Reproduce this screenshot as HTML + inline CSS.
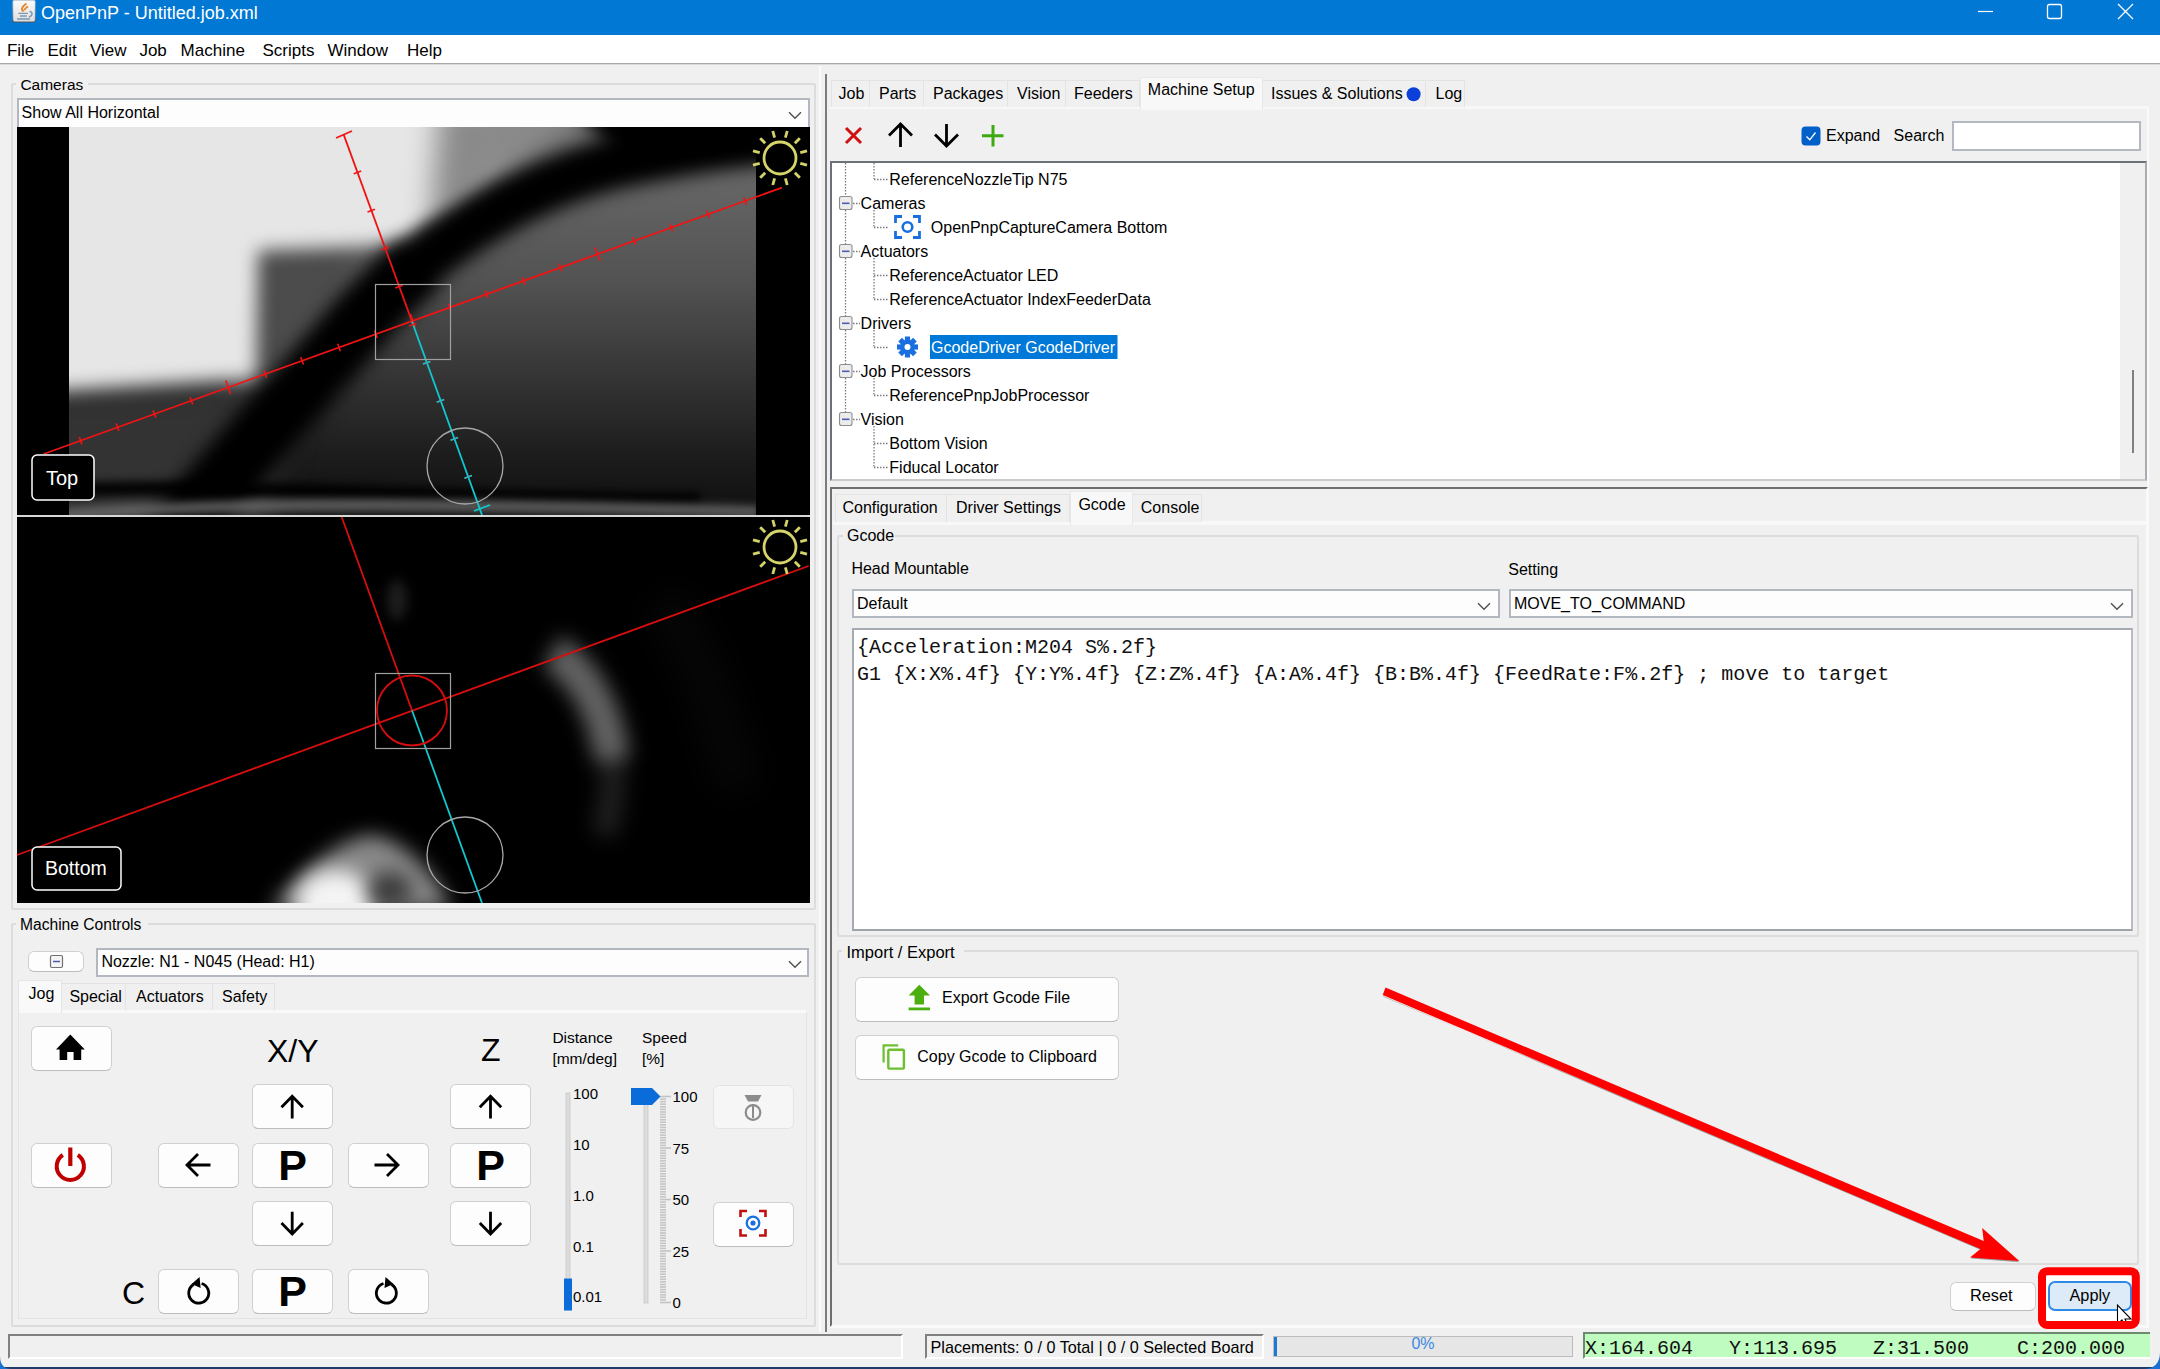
<!DOCTYPE html>
<html><head><meta charset="utf-8"><style>
html,body{margin:0;padding:0;}
body{width:2160px;height:1369px;background:#F0F0F0;position:relative;overflow:hidden;font-family:"Liberation Sans",sans-serif;}
.t{position:absolute;white-space:nowrap;line-height:1;font-family:"Liberation Sans",sans-serif;}
.m{position:absolute;white-space:pre;line-height:1;font-family:"Liberation Mono",monospace;}
.r{position:absolute;box-sizing:border-box;}
.btn{position:absolute;box-sizing:border-box;background:#FDFDFD;border:1px solid #D0D0D0;border-bottom-color:#BDBDBD;border-radius:6px;}
.combo{position:absolute;box-sizing:border-box;background:#FDFDFD;border:2px solid #B3B7BF;}
.tb{position:absolute;box-sizing:border-box;border:2px solid #DCDCDC;border-radius:2px;}
svg{position:absolute;overflow:visible;}
</style></head><body>
<div class="r" style="left:0px;top:0px;width:2160px;height:35px;background:#0078D4;"></div>
<svg style="left:0;top:0" width="40" height="35">
<defs><linearGradient id="jg" x1="0" y1="0" x2="0" y2="1"><stop offset="0" stop-color="#FAFAFA"/><stop offset="1" stop-color="#DEDEDE"/></linearGradient></defs>
<linearGradient id="jb" x1="0" y1="0" x2="0" y2="1"><stop offset="0" stop-color="#C8D2DC"/><stop offset="0.7" stop-color="#8A949E"/><stop offset="1" stop-color="#4A525A"/></linearGradient><rect x="12.5" y="0" width="23" height="22.5" rx="1.5" fill="url(#jb)"/>
<rect x="13.3" y="1" width="21.5" height="20.5" rx="1.5" fill="url(#jg)"/>
<path d="M23.5 11.5 C 20 9, 23 6, 26.5 3.5 M24.5 10.5 C 24 9, 26 8, 28 6.5" stroke="#E8862A" stroke-width="1.8" fill="none"/>
<path d="M18.3 13.3 H28 M20 16 H26.8 M17 19 H30" stroke="#7E98B4" stroke-width="1.3"/>
<path d="M29.5 11.5 C 33 12, 33 15.5, 29 17" stroke="#7E98B4" stroke-width="1.4" fill="none"/>
</svg>
<div class="t" style="left:41px;top:4.26px;font-size:18px;color:#FFFFFF;">OpenPnP - Untitled.job.xml</div>
<svg style="left:0;top:0" width="2160" height="35">
<line x1="1978" y1="11.5" x2="1993" y2="11.5" stroke="#FFF" stroke-width="1.2"/>
<rect x="2047.5" y="4.5" width="14" height="14" rx="2" fill="none" stroke="#FFF" stroke-width="1.3"/>
<path d="M2118 4 L2133 19 M2133 4 L2118 19" stroke="#FFF" stroke-width="1.3"/>
</svg>
<div class="r" style="left:0px;top:35px;width:2160px;height:28px;background:#FFFFFF;"></div>
<div class="r" style="left:0px;top:63px;width:2160px;height:1px;background:#A9A9A9;"></div>
<div class="r" style="left:0px;top:64px;width:2160px;height:1px;background:#DADADA;"></div>
<div class="t" style="left:6.9px;top:41.61px;font-size:17px;color:#000;">File</div>
<div class="t" style="left:47.5px;top:41.61px;font-size:17px;color:#000;">Edit</div>
<div class="t" style="left:90px;top:41.61px;font-size:17px;color:#000;">View</div>
<div class="t" style="left:139.4px;top:41.61px;font-size:17px;color:#000;">Job</div>
<div class="t" style="left:180.6px;top:41.61px;font-size:17px;color:#000;">Machine</div>
<div class="t" style="left:262.5px;top:41.61px;font-size:17px;color:#000;">Scripts</div>
<div class="t" style="left:327.5px;top:41.61px;font-size:17px;color:#000;">Window</div>
<div class="t" style="left:407px;top:41.61px;font-size:17px;color:#000;">Help</div>
<div class="tb" style="left:11px;top:83px;width:805px;height:827px;"></div>
<div class="r" style="left:16px;top:74px;width:72px;height:20px;background:#F0F0F0;"></div>
<div class="t" style="left:20.4px;top:77.28px;font-size:15.5px;color:#000;">Cameras</div>
<div class="combo" style="left:17px;top:98px;width:793px;height:31px;"></div>
<div class="t" style="left:21.6px;top:104.86px;font-size:16px;color:#000;">Show All Horizontal</div>
<svg style="left:0;top:0" width="1" height="1"><path d="M789 112.2 L795 118.2 L801 112.2" stroke="#505050" stroke-width="1.4" fill="none"/></svg>
<svg style="left:17px;top:127px" width="793" height="388" viewBox="17 127 793 388">
<defs>
<filter id="b8" filterUnits="userSpaceOnUse" color-interpolation-filters="sRGB" x="0" y="0" width="900" height="1000"><feGaussianBlur stdDeviation="9"/></filter>
<filter id="b14" filterUnits="userSpaceOnUse" color-interpolation-filters="sRGB" x="0" y="0" width="900" height="1000"><feGaussianBlur stdDeviation="14"/></filter>
<filter id="b5" filterUnits="userSpaceOnUse" color-interpolation-filters="sRGB" x="0" y="0" width="900" height="1000"><feGaussianBlur stdDeviation="5"/></filter>
<linearGradient id="bg1" x1="0" y1="0" x2="0" y2="1">
<stop offset="0" stop-color="#707070"/><stop offset="0.4" stop-color="#525252"/><stop offset="0.85" stop-color="#1C1C1C"/><stop offset="1" stop-color="#101010"/>
</linearGradient>
<clipPath id="cimg"><rect x="69" y="127" width="687" height="388"/></clipPath>
</defs>
<rect x="17" y="127" width="793" height="388" fill="#000"/>
<g clip-path="url(#cimg)">
<rect x="69" y="127" width="687" height="388" fill="url(#bg1)"/>
<path d="M40 390 L40 540 L260 540 L300 390 Z" fill="#333333" filter="url(#b14)"/>
<path d="M230 255 L350 250 L330 390 L230 390 Z" fill="#4C4C4C" filter="url(#b8)"/>
<path d="M40 100 L470 100 L500 160 L540 130 L440 215 L395 245 L258 250 L256 378 L40 392 Z" fill="#E6E6E6" filter="url(#b8)"/>
<path d="M440 100 L600 100 L480 200 L430 225 Z" fill="#8A8A8A" filter="url(#b14)"/>
<path d="M575 110 L820 110 L820 142 C 760 144, 700 148, 620 158 Z" fill="#000" filter="url(#b8)"/>
<g filter="url(#b8)"><path d="M168 545 C 228 470, 305 385, 360 322 C 380 300, 400 280, 420 262" stroke="#000" stroke-width="64" fill="none"/><path d="M380 300 C 430 250, 520 180, 640 158 C 700 146, 740 140, 820 134" stroke="#000" stroke-width="52" fill="none"/></g>
<path d="M40 492 C 200 480, 400 500, 700 500" stroke="#000" stroke-width="14" fill="none" filter="url(#b5)"/>
<path d="M60 515 C 250 500, 500 505, 760 512" stroke="#6A6A6A" stroke-width="10" fill="none" filter="url(#b5)"/>
</g>
<line x1="43.7" y1="454" x2="782" y2="187.6" stroke="#F01414" stroke-width="1.8"/><line x1="82.0" y1="444.4" x2="79.3" y2="436.9" stroke="#F01414" stroke-width="1.6"/><line x1="118.9" y1="431.1" x2="116.2" y2="423.6" stroke="#F01414" stroke-width="1.6"/><line x1="155.8" y1="417.8" x2="153.1" y2="410.3" stroke="#F01414" stroke-width="1.6"/><line x1="192.7" y1="404.5" x2="190.0" y2="397.0" stroke="#F01414" stroke-width="1.6"/><line x1="230.7" y1="394.2" x2="225.8" y2="380.6" stroke="#F01414" stroke-width="1.6"/><line x1="266.5" y1="377.8" x2="263.8" y2="370.3" stroke="#F01414" stroke-width="1.6"/><line x1="303.5" y1="364.5" x2="300.7" y2="357.0" stroke="#F01414" stroke-width="1.6"/><line x1="340.4" y1="351.2" x2="337.7" y2="343.7" stroke="#F01414" stroke-width="1.6"/><line x1="377.3" y1="337.9" x2="374.6" y2="330.4" stroke="#F01414" stroke-width="1.6"/><line x1="415.3" y1="327.6" x2="410.4" y2="314.0" stroke="#F01414" stroke-width="1.6"/><line x1="451.1" y1="311.2" x2="448.4" y2="303.7" stroke="#F01414" stroke-width="1.6"/><line x1="488.0" y1="297.9" x2="485.3" y2="290.4" stroke="#F01414" stroke-width="1.6"/><line x1="525.0" y1="284.6" x2="522.2" y2="277.1" stroke="#F01414" stroke-width="1.6"/><line x1="561.9" y1="271.3" x2="559.2" y2="263.8" stroke="#F01414" stroke-width="1.6"/><line x1="599.9" y1="261.0" x2="595.0" y2="247.4" stroke="#F01414" stroke-width="1.6"/><line x1="635.7" y1="244.6" x2="633.0" y2="237.1" stroke="#F01414" stroke-width="1.6"/><line x1="672.6" y1="231.3" x2="669.9" y2="223.8" stroke="#F01414" stroke-width="1.6"/><line x1="709.5" y1="218.0" x2="706.8" y2="210.5" stroke="#F01414" stroke-width="1.6"/><line x1="746.4" y1="204.7" x2="743.7" y2="197.2" stroke="#F01414" stroke-width="1.6"/><line x1="343.6" y1="134.4" x2="412" y2="321.5" stroke="#F01414" stroke-width="1.8"/><line x1="412" y1="321.5" x2="482" y2="515" stroke="#10C8D0" stroke-width="1.8"/><line x1="353.7" y1="173.8" x2="361.2" y2="171.1" stroke="#F01414" stroke-width="1.6"/><line x1="367.5" y1="211.9" x2="375.0" y2="209.2" stroke="#F01414" stroke-width="1.6"/><line x1="381.4" y1="249.9" x2="388.9" y2="247.2" stroke="#F01414" stroke-width="1.6"/><line x1="395.2" y1="288.0" x2="402.7" y2="285.3" stroke="#F01414" stroke-width="1.6"/><line x1="409.0" y1="326.1" x2="416.6" y2="323.3" stroke="#F01414" stroke-width="1.6"/><line x1="422.9" y1="364.1" x2="430.4" y2="361.4" stroke="#F01414" stroke-width="1.6"/><line x1="436.7" y1="402.2" x2="444.2" y2="399.5" stroke="#F01414" stroke-width="1.6"/><line x1="450.6" y1="440.2" x2="458.1" y2="437.5" stroke="#F01414" stroke-width="1.6"/><line x1="464.4" y1="478.3" x2="471.9" y2="475.6" stroke="#F01414" stroke-width="1.6"/><line x1="422.9" y1="364.1" x2="430.4" y2="361.4" stroke="#10C8D0" stroke-width="1.6"/><line x1="436.7" y1="402.2" x2="444.2" y2="399.5" stroke="#10C8D0" stroke-width="1.6"/><line x1="450.6" y1="440.2" x2="458.1" y2="437.5" stroke="#10C8D0" stroke-width="1.6"/><line x1="464.4" y1="478.3" x2="471.9" y2="475.6" stroke="#10C8D0" stroke-width="1.6"/><line x1="336" y1="138" x2="352" y2="131" stroke="#F01414" stroke-width="1.8"/><line x1="474" y1="511" x2="490" y2="505" stroke="#10C8D0" stroke-width="1.8"/><rect x="375.5" y="284.5" width="75" height="75" fill="none" stroke="#A0A0A0" stroke-width="1.2"/><circle cx="465" cy="466" r="38" fill="none" stroke="#A8A8A8" stroke-width="1.3"/><circle cx="780" cy="158" r="16" fill="none" stroke="#D4D46A" stroke-width="2.8"/><line x1="800.3" y1="163.4" x2="807.0" y2="165.2" stroke="#D4D46A" stroke-width="2.8"/><line x1="794.8" y1="172.8" x2="799.8" y2="177.8" stroke="#D4D46A" stroke-width="2.8"/><line x1="785.4" y1="178.3" x2="787.2" y2="185.0" stroke="#D4D46A" stroke-width="2.8"/><line x1="774.6" y1="178.3" x2="772.8" y2="185.0" stroke="#D4D46A" stroke-width="2.8"/><line x1="765.2" y1="172.8" x2="760.2" y2="177.8" stroke="#D4D46A" stroke-width="2.8"/><line x1="759.7" y1="163.4" x2="753.0" y2="165.2" stroke="#D4D46A" stroke-width="2.8"/><line x1="759.7" y1="152.6" x2="753.0" y2="150.8" stroke="#D4D46A" stroke-width="2.8"/><line x1="765.2" y1="143.2" x2="760.2" y2="138.2" stroke="#D4D46A" stroke-width="2.8"/><line x1="774.6" y1="137.7" x2="772.8" y2="131.0" stroke="#D4D46A" stroke-width="2.8"/><line x1="785.4" y1="137.7" x2="787.2" y2="131.0" stroke="#D4D46A" stroke-width="2.8"/><line x1="794.8" y1="143.2" x2="799.8" y2="138.2" stroke="#D4D46A" stroke-width="2.8"/><line x1="800.3" y1="152.6" x2="807.0" y2="150.8" stroke="#D4D46A" stroke-width="2.8"/><rect x="32" y="455" width="62" height="45" rx="5" fill="#000" stroke="#FFF" stroke-width="1.5"/><text x="46" y="485" fill="#FFF" font-family="Liberation Sans" font-size="20">Top</text></svg>
<div class="r" style="left:17px;top:515px;width:793px;height:2px;background:#D8D8D8;"></div>
<svg style="left:17px;top:517px" width="793" height="386" viewBox="17 517 793 386">
<defs>
<filter id="c6" filterUnits="userSpaceOnUse" color-interpolation-filters="sRGB" x="0" y="0" width="900" height="1000"><feGaussianBlur stdDeviation="6"/></filter>
<filter id="c10" filterUnits="userSpaceOnUse" color-interpolation-filters="sRGB" x="0" y="0" width="900" height="1000"><feGaussianBlur stdDeviation="10"/></filter>
<filter id="c16" filterUnits="userSpaceOnUse" color-interpolation-filters="sRGB" x="0" y="0" width="900" height="1000"><feGaussianBlur stdDeviation="16"/></filter>
<clipPath id="cimg2"><rect x="17" y="517" width="793" height="386"/></clipPath>
</defs>
<rect x="17" y="517" width="793" height="386" fill="#000"/>
<g clip-path="url(#cimg2)">
<g filter="url(#c10)"><path d="M612 760 C 614 790, 610 815, 603 835" stroke="#1E1E1E" stroke-width="26" fill="none"/><path d="M552 652 C 575 665, 605 700, 612 760" stroke="#626262" stroke-width="36" fill="none"/></g>
<ellipse cx="397" cy="600" rx="10" ry="20" fill="#1E1E1E" filter="url(#c6)"/>
<path d="M660 600 C 700 650, 720 720, 740 790" stroke="#060606" stroke-width="44" fill="none" filter="url(#c16)"/>
<path d="M270 910 C 300 870, 350 830, 378 836 C 410 845, 440 880, 450 910 Z" fill="#8A8A8A" filter="url(#c10)"/>
<ellipse cx="335" cy="905" rx="40" ry="35" fill="#F4F4F4" filter="url(#c10)"/>
<ellipse cx="390" cy="890" rx="22" ry="18" fill="#3A3A3A" filter="url(#c10)"/>
</g>
<line x1="17" y1="855" x2="808.6" y2="566" stroke="#D80E0E" stroke-width="1.8"/><line x1="341.7" y1="517" x2="412" y2="710.5" stroke="#D80E0E" stroke-width="1.8"/><line x1="412" y1="710.5" x2="482" y2="903" stroke="#10C8D0" stroke-width="1.8"/><rect x="375.5" y="673.5" width="75" height="75" fill="none" stroke="#A0A0A0" stroke-width="1.2"/><circle cx="412" cy="710.5" r="35" fill="none" stroke="#D80E0E" stroke-width="1.8"/><circle cx="465" cy="855" r="38" fill="none" stroke="#A8A8A8" stroke-width="1.3"/><circle cx="780" cy="547" r="16" fill="none" stroke="#D4D46A" stroke-width="2.8"/><line x1="800.3" y1="552.4" x2="807.0" y2="554.2" stroke="#D4D46A" stroke-width="2.8"/><line x1="794.8" y1="561.8" x2="799.8" y2="566.8" stroke="#D4D46A" stroke-width="2.8"/><line x1="785.4" y1="567.3" x2="787.2" y2="574.0" stroke="#D4D46A" stroke-width="2.8"/><line x1="774.6" y1="567.3" x2="772.8" y2="574.0" stroke="#D4D46A" stroke-width="2.8"/><line x1="765.2" y1="561.8" x2="760.2" y2="566.8" stroke="#D4D46A" stroke-width="2.8"/><line x1="759.7" y1="552.4" x2="753.0" y2="554.2" stroke="#D4D46A" stroke-width="2.8"/><line x1="759.7" y1="541.6" x2="753.0" y2="539.8" stroke="#D4D46A" stroke-width="2.8"/><line x1="765.2" y1="532.2" x2="760.2" y2="527.2" stroke="#D4D46A" stroke-width="2.8"/><line x1="774.6" y1="526.7" x2="772.8" y2="520.0" stroke="#D4D46A" stroke-width="2.8"/><line x1="785.4" y1="526.7" x2="787.2" y2="520.0" stroke="#D4D46A" stroke-width="2.8"/><line x1="794.8" y1="532.2" x2="799.8" y2="527.2" stroke="#D4D46A" stroke-width="2.8"/><line x1="800.3" y1="541.6" x2="807.0" y2="539.8" stroke="#D4D46A" stroke-width="2.8"/><rect x="32" y="847" width="89" height="43" rx="5" fill="#000" stroke="#FFF" stroke-width="1.5"/><text x="45" y="875" fill="#FFF" font-family="Liberation Sans" font-size="19.5">Bottom</text></svg>
<div class="tb" style="left:11px;top:923px;width:805px;height:404px;"></div>
<div class="r" style="left:16px;top:912px;width:132px;height:20px;background:#F0F0F0;"></div>
<div class="t" style="left:20px;top:917.29px;font-size:15.6px;color:#000;">Machine Controls</div>
<div class="btn" style="left:28px;top:951px;width:56px;height:21px;border-radius:6px;"></div>
<svg style="left:0;top:0" width="1" height="1"><rect x="50.5" y="955.5" width="12" height="12" rx="1.5" fill="#F4F4F4" stroke="#707070" stroke-width="1.2"/><line x1="53" y1="961.5" x2="60" y2="961.5" stroke="#4A5AB0" stroke-width="1.5"/></svg>
<div class="combo" style="left:96px;top:948px;width:713px;height:29px;"></div>
<div class="t" style="left:101.4px;top:954.46px;font-size:16px;color:#000;">Nozzle: N1 - N045 (Head: H1)</div>
<svg style="left:0;top:0" width="1" height="1"><path d="M789 961.2 L795 967.2 L801 961.2" stroke="#505050" stroke-width="1.4" fill="none"/></svg>
<div class="r" style="left:18px;top:1010px;width:789px;height:309px;border:1px solid #E4E4E4;border-top:3px solid #F9F9F9;"></div>
<div class="r" style="left:18px;top:980px;width:44px;height:33px;background:#F9F9F9;border:1px solid #E6E6E6;border-bottom:none;"></div>
<div class="t" style="left:28.5px;top:985.76px;font-size:16px;color:#000;">Jog</div>
<div class="r" style="left:62px;top:983px;width:64.4px;height:27px;background:#F0F0F0;border:1px solid #E2E2E2;border-bottom:none;border-left:none;"></div>
<div class="t" style="left:69.4px;top:989.26px;font-size:16px;color:#000;">Special</div>
<div class="r" style="left:126.4px;top:983px;width:86.79999999999998px;height:27px;background:#F0F0F0;border:1px solid #E2E2E2;border-bottom:none;border-left:none;"></div>
<div class="t" style="left:136.1px;top:989.26px;font-size:16px;color:#000;">Actuators</div>
<div class="r" style="left:213.2px;top:983px;width:61.80000000000001px;height:27px;background:#F0F0F0;border:1px solid #E2E2E2;border-bottom:none;border-left:none;"></div>
<div class="t" style="left:222px;top:989.26px;font-size:16px;color:#000;">Safety</div>
<div class="btn" style="left:31px;top:1026px;width:81px;height:45px;"></div>
<div class="btn" style="left:252px;top:1084px;width:81px;height:45px;"></div>
<div class="btn" style="left:31px;top:1143px;width:81px;height:45px;"></div>
<div class="btn" style="left:158px;top:1143px;width:81px;height:45px;"></div>
<div class="btn" style="left:252px;top:1143px;width:81px;height:45px;"></div>
<div class="btn" style="left:348px;top:1143px;width:81px;height:45px;"></div>
<div class="btn" style="left:252px;top:1201px;width:81px;height:45px;"></div>
<div class="btn" style="left:158px;top:1269px;width:81px;height:45px;"></div>
<div class="btn" style="left:252px;top:1269px;width:81px;height:45px;"></div>
<div class="btn" style="left:348px;top:1269px;width:81px;height:45px;"></div>
<div class="btn" style="left:450px;top:1084px;width:81px;height:45px;"></div>
<div class="btn" style="left:450px;top:1143px;width:81px;height:45px;"></div>
<div class="btn" style="left:450px;top:1201px;width:81px;height:45px;"></div>
<div class="btn" style="left:713px;top:1202px;width:81px;height:45px;"></div>
<div class="btn" style="left:713px;top:1085px;width:81px;height:44px;background:#F6F6F6;border-color:#E4E4E4;"></div>
<svg style="left:0;top:0" width="1" height="1"><path d="M56 1049.5 L70.3 1034.5 L84.8 1049.5 L81.2 1049.5 L81.2 1060 L73.6 1060 L73.6 1052 L67.2 1052 L67.2 1060 L59.6 1060 L59.6 1049.5 Z" fill="#000"/><path d="M292.2 1118.5 L292.2 1096.8 M281.5 1107.3 L292.2 1096.3 L302.9 1107.3" stroke="#000" stroke-width="2.8" fill="none" stroke-linejoin="miter"/><path d="M490.5 1118.5 L490.5 1096.8 M479.8 1107.3 L490.5 1096.3 L501.2 1107.3" stroke="#000" stroke-width="2.8" fill="none" stroke-linejoin="miter"/><path d="M292.2 1211.7 L292.2 1233.5 M281.5 1223.0 L292.2 1234.0 L302.9 1223.0" stroke="#000" stroke-width="2.8" fill="none"/><path d="M490.5 1211.7 L490.5 1233.5 M479.8 1223.0 L490.5 1234.0 L501.2 1223.0" stroke="#000" stroke-width="2.8" fill="none"/><path d="M210.5 1165 L187 1165 M198 1154 L187 1165 L198 1176" stroke="#000" stroke-width="2.8" fill="none"/><path d="M374.5 1165 L398 1165 M387 1154 L398 1165 L387 1176" stroke="#000" stroke-width="2.8" fill="none"/><path d="M62.8 1155 A 13.6 13.6 0 1 0 77.8 1155" stroke="#C00000" stroke-width="4" fill="none"/><line x1="70.3" y1="1147.5" x2="70.3" y2="1166" stroke="#C00000" stroke-width="4.2"/><path d="M193.6 1284.5 A 10 10 0 1 0 201.6 1283.5" stroke="#000" stroke-width="2.8" fill="none"/><path d="M199.6 1277 L191.6 1284 L200.6 1288 Z" fill="#000"/><path d="M391.5 1284.5 A 10 10 0 1 1 383.5 1283.5" stroke="#000" stroke-width="2.8" fill="none"/><path d="M385.5 1277 L393.5 1284 L384.5 1288 Z" fill="#000"/><path d="M744.5 1095 L761.5 1095 L758 1101.5 L748 1101.5 Z" fill="#8C8C8C"/><circle cx="753" cy="1112.5" r="7.3" fill="none" stroke="#8C8C8C" stroke-width="2.2"/><line x1="753" y1="1104" x2="753" y2="1118" stroke="#8C8C8C" stroke-width="2"/><path d="M740.5 1217 V1211 H747 M759 1211 H765.5 V1217 M765.5 1229 V1235.5 H759 M747 1235.5 H740.5 V1229" stroke="#C01010" stroke-width="2.6" fill="none"/><circle cx="753" cy="1223" r="6.3" fill="none" stroke="#1A6FE0" stroke-width="2.3"/><circle cx="753" cy="1223" r="2.6" fill="#1A6FE0"/><rect x="566" y="1093" width="4" height="217" fill="#DCDCDC" stroke="#C8C8C8" stroke-width="0.8"/><rect x="564" y="1278.5" width="8" height="32" fill="#0A6CD8"/><rect x="644" y="1097" width="4" height="206" fill="#DCDCDC" stroke="#C8C8C8" stroke-width="0.8"/><line x1="660" y1="1096.5" x2="671" y2="1096.5" stroke="#C4C4C4" stroke-width="1.6"/><line x1="660" y1="1099.1" x2="666" y2="1099.1" stroke="#C4C4C4" stroke-width="1.6"/><line x1="660" y1="1101.7" x2="666" y2="1101.7" stroke="#C4C4C4" stroke-width="1.6"/><line x1="660" y1="1104.2" x2="666" y2="1104.2" stroke="#C4C4C4" stroke-width="1.6"/><line x1="660" y1="1106.8" x2="666" y2="1106.8" stroke="#C4C4C4" stroke-width="1.6"/><line x1="660" y1="1109.4" x2="666" y2="1109.4" stroke="#C4C4C4" stroke-width="1.6"/><line x1="660" y1="1112.0" x2="666" y2="1112.0" stroke="#C4C4C4" stroke-width="1.6"/><line x1="660" y1="1114.5" x2="666" y2="1114.5" stroke="#C4C4C4" stroke-width="1.6"/><line x1="660" y1="1117.1" x2="666" y2="1117.1" stroke="#C4C4C4" stroke-width="1.6"/><line x1="660" y1="1119.7" x2="666" y2="1119.7" stroke="#C4C4C4" stroke-width="1.6"/><line x1="660" y1="1122.2" x2="666" y2="1122.2" stroke="#C4C4C4" stroke-width="1.6"/><line x1="660" y1="1124.8" x2="666" y2="1124.8" stroke="#C4C4C4" stroke-width="1.6"/><line x1="660" y1="1127.4" x2="666" y2="1127.4" stroke="#C4C4C4" stroke-width="1.6"/><line x1="660" y1="1130.0" x2="666" y2="1130.0" stroke="#C4C4C4" stroke-width="1.6"/><line x1="660" y1="1132.5" x2="666" y2="1132.5" stroke="#C4C4C4" stroke-width="1.6"/><line x1="660" y1="1135.1" x2="666" y2="1135.1" stroke="#C4C4C4" stroke-width="1.6"/><line x1="660" y1="1137.7" x2="666" y2="1137.7" stroke="#C4C4C4" stroke-width="1.6"/><line x1="660" y1="1140.3" x2="666" y2="1140.3" stroke="#C4C4C4" stroke-width="1.6"/><line x1="660" y1="1142.8" x2="666" y2="1142.8" stroke="#C4C4C4" stroke-width="1.6"/><line x1="660" y1="1145.4" x2="666" y2="1145.4" stroke="#C4C4C4" stroke-width="1.6"/><line x1="660" y1="1148.0" x2="671" y2="1148.0" stroke="#C4C4C4" stroke-width="1.6"/><line x1="660" y1="1150.6" x2="666" y2="1150.6" stroke="#C4C4C4" stroke-width="1.6"/><line x1="660" y1="1153.2" x2="666" y2="1153.2" stroke="#C4C4C4" stroke-width="1.6"/><line x1="660" y1="1155.7" x2="666" y2="1155.7" stroke="#C4C4C4" stroke-width="1.6"/><line x1="660" y1="1158.3" x2="666" y2="1158.3" stroke="#C4C4C4" stroke-width="1.6"/><line x1="660" y1="1160.9" x2="666" y2="1160.9" stroke="#C4C4C4" stroke-width="1.6"/><line x1="660" y1="1163.5" x2="666" y2="1163.5" stroke="#C4C4C4" stroke-width="1.6"/><line x1="660" y1="1166.0" x2="666" y2="1166.0" stroke="#C4C4C4" stroke-width="1.6"/><line x1="660" y1="1168.6" x2="666" y2="1168.6" stroke="#C4C4C4" stroke-width="1.6"/><line x1="660" y1="1171.2" x2="666" y2="1171.2" stroke="#C4C4C4" stroke-width="1.6"/><line x1="660" y1="1173.8" x2="666" y2="1173.8" stroke="#C4C4C4" stroke-width="1.6"/><line x1="660" y1="1176.3" x2="666" y2="1176.3" stroke="#C4C4C4" stroke-width="1.6"/><line x1="660" y1="1178.9" x2="666" y2="1178.9" stroke="#C4C4C4" stroke-width="1.6"/><line x1="660" y1="1181.5" x2="666" y2="1181.5" stroke="#C4C4C4" stroke-width="1.6"/><line x1="660" y1="1184.0" x2="666" y2="1184.0" stroke="#C4C4C4" stroke-width="1.6"/><line x1="660" y1="1186.6" x2="666" y2="1186.6" stroke="#C4C4C4" stroke-width="1.6"/><line x1="660" y1="1189.2" x2="666" y2="1189.2" stroke="#C4C4C4" stroke-width="1.6"/><line x1="660" y1="1191.8" x2="666" y2="1191.8" stroke="#C4C4C4" stroke-width="1.6"/><line x1="660" y1="1194.3" x2="666" y2="1194.3" stroke="#C4C4C4" stroke-width="1.6"/><line x1="660" y1="1196.9" x2="666" y2="1196.9" stroke="#C4C4C4" stroke-width="1.6"/><line x1="660" y1="1199.5" x2="671" y2="1199.5" stroke="#C4C4C4" stroke-width="1.6"/><line x1="660" y1="1202.1" x2="666" y2="1202.1" stroke="#C4C4C4" stroke-width="1.6"/><line x1="660" y1="1204.7" x2="666" y2="1204.7" stroke="#C4C4C4" stroke-width="1.6"/><line x1="660" y1="1207.2" x2="666" y2="1207.2" stroke="#C4C4C4" stroke-width="1.6"/><line x1="660" y1="1209.8" x2="666" y2="1209.8" stroke="#C4C4C4" stroke-width="1.6"/><line x1="660" y1="1212.4" x2="666" y2="1212.4" stroke="#C4C4C4" stroke-width="1.6"/><line x1="660" y1="1215.0" x2="666" y2="1215.0" stroke="#C4C4C4" stroke-width="1.6"/><line x1="660" y1="1217.5" x2="666" y2="1217.5" stroke="#C4C4C4" stroke-width="1.6"/><line x1="660" y1="1220.1" x2="666" y2="1220.1" stroke="#C4C4C4" stroke-width="1.6"/><line x1="660" y1="1222.7" x2="666" y2="1222.7" stroke="#C4C4C4" stroke-width="1.6"/><line x1="660" y1="1225.2" x2="666" y2="1225.2" stroke="#C4C4C4" stroke-width="1.6"/><line x1="660" y1="1227.8" x2="666" y2="1227.8" stroke="#C4C4C4" stroke-width="1.6"/><line x1="660" y1="1230.4" x2="666" y2="1230.4" stroke="#C4C4C4" stroke-width="1.6"/><line x1="660" y1="1233.0" x2="666" y2="1233.0" stroke="#C4C4C4" stroke-width="1.6"/><line x1="660" y1="1235.5" x2="666" y2="1235.5" stroke="#C4C4C4" stroke-width="1.6"/><line x1="660" y1="1238.1" x2="666" y2="1238.1" stroke="#C4C4C4" stroke-width="1.6"/><line x1="660" y1="1240.7" x2="666" y2="1240.7" stroke="#C4C4C4" stroke-width="1.6"/><line x1="660" y1="1243.3" x2="666" y2="1243.3" stroke="#C4C4C4" stroke-width="1.6"/><line x1="660" y1="1245.8" x2="666" y2="1245.8" stroke="#C4C4C4" stroke-width="1.6"/><line x1="660" y1="1248.4" x2="666" y2="1248.4" stroke="#C4C4C4" stroke-width="1.6"/><line x1="660" y1="1251.0" x2="671" y2="1251.0" stroke="#C4C4C4" stroke-width="1.6"/><line x1="660" y1="1253.6" x2="666" y2="1253.6" stroke="#C4C4C4" stroke-width="1.6"/><line x1="660" y1="1256.2" x2="666" y2="1256.2" stroke="#C4C4C4" stroke-width="1.6"/><line x1="660" y1="1258.7" x2="666" y2="1258.7" stroke="#C4C4C4" stroke-width="1.6"/><line x1="660" y1="1261.3" x2="666" y2="1261.3" stroke="#C4C4C4" stroke-width="1.6"/><line x1="660" y1="1263.9" x2="666" y2="1263.9" stroke="#C4C4C4" stroke-width="1.6"/><line x1="660" y1="1266.5" x2="666" y2="1266.5" stroke="#C4C4C4" stroke-width="1.6"/><line x1="660" y1="1269.0" x2="666" y2="1269.0" stroke="#C4C4C4" stroke-width="1.6"/><line x1="660" y1="1271.6" x2="666" y2="1271.6" stroke="#C4C4C4" stroke-width="1.6"/><line x1="660" y1="1274.2" x2="666" y2="1274.2" stroke="#C4C4C4" stroke-width="1.6"/><line x1="660" y1="1276.8" x2="666" y2="1276.8" stroke="#C4C4C4" stroke-width="1.6"/><line x1="660" y1="1279.3" x2="666" y2="1279.3" stroke="#C4C4C4" stroke-width="1.6"/><line x1="660" y1="1281.9" x2="666" y2="1281.9" stroke="#C4C4C4" stroke-width="1.6"/><line x1="660" y1="1284.5" x2="666" y2="1284.5" stroke="#C4C4C4" stroke-width="1.6"/><line x1="660" y1="1287.0" x2="666" y2="1287.0" stroke="#C4C4C4" stroke-width="1.6"/><line x1="660" y1="1289.6" x2="666" y2="1289.6" stroke="#C4C4C4" stroke-width="1.6"/><line x1="660" y1="1292.2" x2="666" y2="1292.2" stroke="#C4C4C4" stroke-width="1.6"/><line x1="660" y1="1294.8" x2="666" y2="1294.8" stroke="#C4C4C4" stroke-width="1.6"/><line x1="660" y1="1297.3" x2="666" y2="1297.3" stroke="#C4C4C4" stroke-width="1.6"/><line x1="660" y1="1299.9" x2="666" y2="1299.9" stroke="#C4C4C4" stroke-width="1.6"/><line x1="660" y1="1302.5" x2="671" y2="1302.5" stroke="#C4C4C4" stroke-width="1.6"/><path d="M631 1088 H652 L660.5 1096.5 L652 1105 H631 Z" fill="#0A6CD8"/></svg>
<div class="t" style="left:278.2px;top:1144.20px;font-size:43px;color:#000;font-weight:bold;">P</div>
<div class="t" style="left:278.2px;top:1270.20px;font-size:43px;color:#000;font-weight:bold;">P</div>
<div class="t" style="left:476.2px;top:1144.20px;font-size:43px;color:#000;font-weight:bold;">P</div>
<div class="t" style="left:267px;top:1034.71px;font-size:32px;color:#000;">X/Y</div>
<div class="t" style="left:481px;top:1034.31px;font-size:32px;color:#000;">Z</div>
<div class="t" style="left:122px;top:1276.71px;font-size:32px;color:#000;">C</div>
<div class="t" style="left:552.4px;top:1030.28px;font-size:15.5px;color:#000;">Distance</div>
<div class="t" style="left:552.4px;top:1051.18px;font-size:15.5px;color:#000;">[mm/deg]</div>
<div class="t" style="left:642px;top:1030.28px;font-size:15.5px;color:#000;">Speed</div>
<div class="t" style="left:642px;top:1051.18px;font-size:15.5px;color:#000;">[%]</div>
<div class="t" style="left:573px;top:1085.80px;font-size:15px;color:#000;">100</div>
<div class="t" style="left:573px;top:1136.80px;font-size:15px;color:#000;">10</div>
<div class="t" style="left:573px;top:1187.80px;font-size:15px;color:#000;">1.0</div>
<div class="t" style="left:573px;top:1238.80px;font-size:15px;color:#000;">0.1</div>
<div class="t" style="left:573px;top:1288.80px;font-size:15px;color:#000;">0.01</div>
<div class="t" style="left:672.5px;top:1088.80px;font-size:15px;color:#000;">100</div>
<div class="t" style="left:672.5px;top:1140.80px;font-size:15px;color:#000;">75</div>
<div class="t" style="left:672.5px;top:1192.30px;font-size:15px;color:#000;">50</div>
<div class="t" style="left:672.5px;top:1243.80px;font-size:15px;color:#000;">25</div>
<div class="t" style="left:672.5px;top:1294.80px;font-size:15px;color:#000;">0</div>
<div class="r" style="left:819px;top:66px;width:2px;height:1266px;background:#FAFAFA;"></div>
<div class="r" style="left:825px;top:74px;width:2px;height:1258px;background:#7C7C7C;"></div>
<div class="r" style="left:830px;top:106px;width:1319px;height:1222px;border-top:3px solid #F8F8F8;border-right:2px solid #FAFAFA;border-bottom:2px solid #FAFAFA;"></div>
<div class="r" style="left:830.7px;top:80px;width:39.69999999999993px;height:27px;background:#F0F0F0;border:1px solid #E3E3E3;border-bottom:none;"></div>
<div class="t" style="left:838.6px;top:85.66px;font-size:16px;color:#000;">Job</div>
<div class="r" style="left:870.4px;top:80px;width:53.60000000000002px;height:27px;background:#F0F0F0;border:1px solid #E3E3E3;border-bottom:none;border-left:none;"></div>
<div class="t" style="left:879px;top:85.66px;font-size:16px;color:#000;">Parts</div>
<div class="r" style="left:924px;top:80px;width:84px;height:27px;background:#F0F0F0;border:1px solid #E3E3E3;border-bottom:none;border-left:none;"></div>
<div class="t" style="left:933px;top:85.66px;font-size:16px;color:#000;">Packages</div>
<div class="r" style="left:1008px;top:80px;width:57.5px;height:27px;background:#F0F0F0;border:1px solid #E3E3E3;border-bottom:none;border-left:none;"></div>
<div class="t" style="left:1017px;top:85.66px;font-size:16px;color:#000;">Vision</div>
<div class="r" style="left:1065.5px;top:80px;width:74.20000000000005px;height:27px;background:#F0F0F0;border:1px solid #E3E3E3;border-bottom:none;border-left:none;"></div>
<div class="t" style="left:1074px;top:85.66px;font-size:16px;color:#000;">Feeders</div>
<div class="r" style="left:1139.7px;top:77px;width:123.5px;height:33px;background:#F8F8F8;border:1px solid #E8E8E8;border-bottom:none;"></div>
<div class="t" style="left:1147.8px;top:82.36px;font-size:16px;color:#000;">Machine Setup</div>
<div class="r" style="left:1263.2px;top:80px;width:163.29999999999995px;height:27px;background:#F0F0F0;border:1px solid #E3E3E3;border-bottom:none;border-left:none;"></div>
<div class="t" style="left:1271px;top:85.66px;font-size:16px;color:#000;">Issues &amp; Solutions</div>
<div class="r" style="left:1426.5px;top:80px;width:38.90000000000009px;height:27px;background:#F0F0F0;border:1px solid #E3E3E3;border-bottom:none;border-left:none;"></div>
<div class="t" style="left:1435.5px;top:85.66px;font-size:16px;color:#000;">Log</div>
<svg style="left:0;top:0" width="1" height="1"><circle cx="1413.6" cy="94.3" r="7" fill="#0A40D8"/></svg>
<svg style="left:0;top:0" width="1" height="1"><path d="M846 128 L861 143 M861 128 L846 143" stroke="#D01010" stroke-width="3"/><path d="M900.5 147 V125 M889 135.5 L900.5 124 L912 135.5" stroke="#000" stroke-width="2.8" fill="none"/><path d="M946.5 124 V146 M935 134.5 L946.5 146 L958 134.5" stroke="#000" stroke-width="2.8" fill="none"/><path d="M993 125 V146.5 M982 135.8 H1003.5" stroke="#3EAA10" stroke-width="3"/><rect x="1801.5" y="126.5" width="19" height="19" rx="4" fill="#005FC8"/><path d="M1806.5 136.5 L1809.8 139.8 L1815.5 132.5" stroke="#FFF" stroke-width="1.3" fill="none"/></svg>
<div class="t" style="left:1826px;top:128.46px;font-size:16px;color:#000;">Expand</div>
<div class="t" style="left:1893.6px;top:128.46px;font-size:16px;color:#000;">Search</div>
<div class="r" style="left:1952px;top:121px;width:189px;height:30px;background:#FFF;border:2px solid #B4B8C0;"></div>
<div class="r" style="left:830px;top:161px;width:1317px;height:320px;background:#FFF;border-top:2px solid #6C7078;border-left:2px solid #6C7078;border-right:2px solid #A8ABB0;border-bottom:2px solid #C8CACD;"></div>
<div class="r" style="left:2120px;top:163px;width:25px;height:316px;background:#F0F0F0;"></div>
<div class="r" style="left:2131.5px;top:370px;width:2px;height:83px;background:#808080;"></div>
<svg style="left:0;top:0" width="1" height="1"><line x1="845.5" y1="163" x2="845.5" y2="196" stroke="#7A7A7A" stroke-width="1.3" stroke-dasharray="1.5 1.5"/><line x1="845.5" y1="210" x2="845.5" y2="244" stroke="#7A7A7A" stroke-width="1.3" stroke-dasharray="1.5 1.5"/><line x1="845.5" y1="258" x2="845.5" y2="316" stroke="#7A7A7A" stroke-width="1.3" stroke-dasharray="1.5 1.5"/><line x1="845.5" y1="330" x2="845.5" y2="364" stroke="#7A7A7A" stroke-width="1.3" stroke-dasharray="1.5 1.5"/><line x1="845.5" y1="378" x2="845.5" y2="412" stroke="#7A7A7A" stroke-width="1.3" stroke-dasharray="1.5 1.5"/><line x1="874" y1="163" x2="874" y2="179" stroke="#7A7A7A" stroke-width="1.3" stroke-dasharray="1.5 1.5"/><line x1="874" y1="210" x2="874" y2="227" stroke="#7A7A7A" stroke-width="1.3" stroke-dasharray="1.5 1.5"/><line x1="874" y1="258" x2="874" y2="299" stroke="#7A7A7A" stroke-width="1.3" stroke-dasharray="1.5 1.5"/><line x1="874" y1="330" x2="874" y2="347" stroke="#7A7A7A" stroke-width="1.3" stroke-dasharray="1.5 1.5"/><line x1="874" y1="378" x2="874" y2="395" stroke="#7A7A7A" stroke-width="1.3" stroke-dasharray="1.5 1.5"/><line x1="874" y1="426" x2="874" y2="467" stroke="#7A7A7A" stroke-width="1.3" stroke-dasharray="1.5 1.5"/><line x1="874" y1="179.5" x2="888" y2="179.5" stroke="#7A7A7A" stroke-width="1.3" stroke-dasharray="1.5 1.5"/><rect x="839.5" y="196.5" width="12.5" height="13" rx="2" fill="#ECECEC" stroke="#8E8E8E" stroke-width="1.1"/><line x1="842" y1="203.3" x2="849.5" y2="203.3" stroke="#4E5EB0" stroke-width="1.6"/><line x1="853" y1="203.5" x2="860" y2="203.5" stroke="#7A7A7A" stroke-width="1.3" stroke-dasharray="1.5 1.5"/><line x1="874" y1="227.5" x2="889" y2="227.5" stroke="#7A7A7A" stroke-width="1.3" stroke-dasharray="1.5 1.5"/><rect x="839.5" y="244.5" width="12.5" height="13" rx="2" fill="#ECECEC" stroke="#8E8E8E" stroke-width="1.1"/><line x1="842" y1="251.3" x2="849.5" y2="251.3" stroke="#4E5EB0" stroke-width="1.6"/><line x1="853" y1="251.5" x2="860" y2="251.5" stroke="#7A7A7A" stroke-width="1.3" stroke-dasharray="1.5 1.5"/><line x1="874" y1="275.5" x2="888" y2="275.5" stroke="#7A7A7A" stroke-width="1.3" stroke-dasharray="1.5 1.5"/><line x1="874" y1="299.5" x2="888" y2="299.5" stroke="#7A7A7A" stroke-width="1.3" stroke-dasharray="1.5 1.5"/><rect x="839.5" y="316.5" width="12.5" height="13" rx="2" fill="#ECECEC" stroke="#8E8E8E" stroke-width="1.1"/><line x1="842" y1="323.3" x2="849.5" y2="323.3" stroke="#4E5EB0" stroke-width="1.6"/><line x1="853" y1="323.5" x2="860" y2="323.5" stroke="#7A7A7A" stroke-width="1.3" stroke-dasharray="1.5 1.5"/><line x1="874" y1="347.5" x2="889" y2="347.5" stroke="#7A7A7A" stroke-width="1.3" stroke-dasharray="1.5 1.5"/><rect x="839.5" y="364.5" width="12.5" height="13" rx="2" fill="#ECECEC" stroke="#8E8E8E" stroke-width="1.1"/><line x1="842" y1="371.3" x2="849.5" y2="371.3" stroke="#4E5EB0" stroke-width="1.6"/><line x1="853" y1="371.5" x2="860" y2="371.5" stroke="#7A7A7A" stroke-width="1.3" stroke-dasharray="1.5 1.5"/><line x1="874" y1="395.5" x2="888" y2="395.5" stroke="#7A7A7A" stroke-width="1.3" stroke-dasharray="1.5 1.5"/><rect x="839.5" y="412.5" width="12.5" height="13" rx="2" fill="#ECECEC" stroke="#8E8E8E" stroke-width="1.1"/><line x1="842" y1="419.3" x2="849.5" y2="419.3" stroke="#4E5EB0" stroke-width="1.6"/><line x1="853" y1="419.5" x2="860" y2="419.5" stroke="#7A7A7A" stroke-width="1.3" stroke-dasharray="1.5 1.5"/><line x1="874" y1="443.5" x2="888" y2="443.5" stroke="#7A7A7A" stroke-width="1.3" stroke-dasharray="1.5 1.5"/><line x1="874" y1="467.5" x2="888" y2="467.5" stroke="#7A7A7A" stroke-width="1.3" stroke-dasharray="1.5 1.5"/><path d="M895.5 223 V216.5 H902 M913 216.5 H919.5 V223 M919.5 231 V237.5 H913 M902 237.5 H895.5 V231" stroke="#1A6FE0" stroke-width="2.8" fill="none"/><circle cx="907.5" cy="227" r="4.8" fill="none" stroke="#1A6FE0" stroke-width="2.6"/><rect x="930" y="335" width="187.5" height="24" fill="#0078D7"/><rect x="-2.6" y="-10.5" width="5.2" height="5" transform="translate(907.5 347) rotate(0)" fill="#1A6FE0"/><rect x="-2.6" y="-10.5" width="5.2" height="5" transform="translate(907.5 347) rotate(45)" fill="#1A6FE0"/><rect x="-2.6" y="-10.5" width="5.2" height="5" transform="translate(907.5 347) rotate(90)" fill="#1A6FE0"/><rect x="-2.6" y="-10.5" width="5.2" height="5" transform="translate(907.5 347) rotate(135)" fill="#1A6FE0"/><rect x="-2.6" y="-10.5" width="5.2" height="5" transform="translate(907.5 347) rotate(180)" fill="#1A6FE0"/><rect x="-2.6" y="-10.5" width="5.2" height="5" transform="translate(907.5 347) rotate(225)" fill="#1A6FE0"/><rect x="-2.6" y="-10.5" width="5.2" height="5" transform="translate(907.5 347) rotate(270)" fill="#1A6FE0"/><rect x="-2.6" y="-10.5" width="5.2" height="5" transform="translate(907.5 347) rotate(315)" fill="#1A6FE0"/><circle cx="907.5" cy="347" r="7.3" fill="#1A6FE0"/><circle cx="907.5" cy="347" r="3" fill="#FFF"/></svg>
<div class="t" style="left:889.3px;top:172.26px;font-size:16px;color:#000;">ReferenceNozzleTip N75</div>
<div class="t" style="left:860.6px;top:196.26px;font-size:16px;color:#000;">Cameras</div>
<div class="t" style="left:930.8px;top:220.26px;font-size:16px;color:#000;">OpenPnpCaptureCamera Bottom</div>
<div class="t" style="left:860.6px;top:244.26px;font-size:16px;color:#000;">Actuators</div>
<div class="t" style="left:889.3px;top:268.26px;font-size:16px;color:#000;">ReferenceActuator LED</div>
<div class="t" style="left:889.3px;top:292.26px;font-size:16px;color:#000;">ReferenceActuator IndexFeederData</div>
<div class="t" style="left:860.6px;top:316.26px;font-size:16px;color:#000;">Drivers</div>
<div class="t" style="left:931px;top:340.26px;font-size:16px;color:#FFF;">GcodeDriver GcodeDriver</div>
<div class="t" style="left:860.6px;top:364.26px;font-size:16px;color:#000;">Job Processors</div>
<div class="t" style="left:889.3px;top:388.26px;font-size:16px;color:#000;">ReferencePnpJobProcessor</div>
<div class="t" style="left:860.6px;top:412.26px;font-size:16px;color:#000;">Vision</div>
<div class="t" style="left:889.3px;top:436.26px;font-size:16px;color:#000;">Bottom Vision</div>
<div class="t" style="left:889.3px;top:460.26px;font-size:16px;color:#000;">Fiducal Locator</div>
<div class="r" style="left:830px;top:487px;width:1318px;height:840px;border-top:2px solid #6E6E6E;border-left:2px solid #6E6E6E;border-right:2px solid #FAFAFA;border-bottom:2px solid #FAFAFA;"></div>
<div class="r" style="left:833px;top:521px;width:1313px;height:4px;background:#F8F8F8;"></div>
<div class="r" style="left:835px;top:493.5px;width:112px;height:28px;background:#F0F0F0;border:1px solid #E3E3E3;border-bottom:none;"></div>
<div class="t" style="left:842.5px;top:500.26px;font-size:16px;color:#000;">Configuration</div>
<div class="r" style="left:947px;top:493.5px;width:122.5px;height:28px;background:#F0F0F0;border:1px solid #E3E3E3;border-bottom:none;border-left:none;"></div>
<div class="t" style="left:956px;top:500.26px;font-size:16px;color:#000;">Driver Settings</div>
<div class="r" style="left:1069.5px;top:491px;width:63.200000000000045px;height:34px;background:#F8F8F8;border:1px solid #E8E8E8;border-bottom:none;"></div>
<div class="t" style="left:1078.4px;top:497.06px;font-size:16px;color:#000;">Gcode</div>
<div class="r" style="left:1132.7px;top:493.5px;width:69.70000000000005px;height:28px;background:#F0F0F0;border:1px solid #E3E3E3;border-bottom:none;border-left:none;"></div>
<div class="t" style="left:1140.8px;top:500.26px;font-size:16px;color:#000;">Console</div>
<div class="tb" style="left:837px;top:535px;width:1302px;height:402px;"></div>
<div class="r" style="left:843px;top:526px;width:52px;height:20px;background:#F0F0F0;"></div>
<div class="t" style="left:847px;top:528.16px;font-size:16px;color:#000;">Gcode</div>
<div class="t" style="left:851.4px;top:561.16px;font-size:16px;color:#000;">Head Mountable</div>
<div class="t" style="left:1508.3px;top:561.96px;font-size:16px;color:#000;">Setting</div>
<div class="combo" style="left:852px;top:589px;width:648px;height:29px;"></div>
<div class="t" style="left:857px;top:595.96px;font-size:16px;color:#000;">Default</div>
<svg style="left:0;top:0" width="1" height="1"><path d="M1478 603.2 L1484 609.2 L1490 603.2" stroke="#505050" stroke-width="1.4" fill="none"/></svg>
<div class="combo" style="left:1509px;top:589px;width:1624px;height:29px;width:624px;"></div>
<div class="t" style="left:1514px;top:595.76px;font-size:16px;color:#000;">MOVE_TO_COMMAND</div>
<svg style="left:0;top:0" width="1" height="1"><path d="M2111 603.2 L2117 609.2 L2123 603.2" stroke="#505050" stroke-width="1.4" fill="none"/></svg>
<div class="r" style="left:852px;top:628px;width:1281px;height:303px;background:#FFF;border-top:2px solid #A6AAB2;border-left:2px solid #A6AAB2;border-right:2px solid #B8BCC4;border-bottom:2px solid #9EA2AA;"></div>
<div class="m" style="left:857px;top:637.5px;font-size:20px;color:#111;">{Acceleration:M204 S%.2f}</div>
<div class="m" style="left:857px;top:665px;font-size:20px;color:#111;">G1 {X:X%.4f} {Y:Y%.4f} {Z:Z%.4f} {A:A%.4f} {B:B%.4f} {FeedRate:F%.2f} ; move to target</div>
<div class="tb" style="left:837px;top:950px;width:1302px;height:315px;"></div>
<div class="r" style="left:842px;top:941px;width:122px;height:20px;background:#F0F0F0;"></div>
<div class="t" style="left:846.5px;top:943.73px;font-size:16.5px;color:#000;">Import / Export</div>
<div class="btn" style="left:854.5px;top:976.7px;width:264px;height:45px;"></div>
<div class="btn" style="left:854.5px;top:1035.2px;width:264px;height:45px;"></div>
<svg style="left:0;top:0" width="1" height="1"><path d="M919.3 984.7 L930 995.5 L924 995.5 L924 1004.5 L914.6 1004.5 L914.6 995.5 L908.6 995.5 Z" fill="#4CAF10"/><rect x="908.6" y="1007.5" width="21.4" height="2.8" fill="#4CAF10"/><path d="M883.6 1062.5 V1045.3 H898.2" stroke="#6CC030" stroke-width="2.2" fill="none"/><rect x="888.3" y="1049.8" width="15.6" height="18.8" rx="1" fill="none" stroke="#6CC030" stroke-width="2.4"/></svg>
<div class="t" style="left:942px;top:990.46px;font-size:16px;color:#000;">Export Gcode File</div>
<div class="t" style="left:917.3px;top:1048.66px;font-size:16px;color:#000;">Copy Gcode to Clipboard</div>
<div class="btn" style="left:1950px;top:1281.5px;width:85.5px;height:29.5px;"></div>
<div class="r" style="left:2046px;top:1275px;width:86px;height:46px;background:#FFFFFF;"></div>
<div class="r" style="left:2047.7px;top:1281px;width:84px;height:30.4px;background:#DDEBF8;border:2px solid #2E8AE6;border-radius:7px;"></div>
<div class="t" style="left:1970px;top:1287.40px;font-size:16.3px;color:#000;">Reset</div>
<div class="t" style="left:2069.5px;top:1287.40px;font-size:16.3px;color:#000;">Apply</div>
<div class="r" style="left:8px;top:1334px;width:895px;height:25px;background:#F0F0F0;border-top:2px solid #808080;border-left:2px solid #808080;border-bottom:2px solid #FFFFFF;border-right:2px solid #FFFFFF;"></div>
<div class="r" style="left:924.5px;top:1334px;width:339px;height:25px;background:#F0F0F0;border-top:2px solid #808080;border-left:2px solid #808080;border-bottom:2px solid #FFFFFF;border-right:2px solid #FFFFFF;"></div>
<div class="t" style="left:930.5px;top:1338.79px;font-size:16.2px;color:#000;">Placements: 0 / 0 Total | 0 / 0 Selected Board</div>
<div class="r" style="left:1273px;top:1335.5px;width:300px;height:21px;background:#E6E6E6;border:1px solid #BCBCBC;"></div>
<div class="r" style="left:1273.5px;top:1336.5px;width:3px;height:19px;background:#1E78D8;"></div>
<div class="t" style="left:1273px;top:1336px;width:300px;text-align:center;font-size:16px;color:#3A8AE0;line-height:1;">0%</div>
<div class="r" style="left:1583px;top:1332px;width:567px;height:27px;background:#BFFCBF;border-top:2px solid #6E8A6E;border-left:2px solid #6E8A6E;border-bottom:2px solid #FFFFFF;"></div>
<div class="m" style="left:1585px;top:1339px;font-size:20px;color:#111;">X:164.604   Y:113.695   Z:31.500    C:200.000</div>
<div class="r" style="left:0px;top:1367px;width:2160px;height:2px;background:#1E3A6A;"></div>
<svg style="left:0;top:0" width="1" height="1"><path d="M0 1356 Q0 1369 12 1369 L0 1369 Z" fill="#1A70D0"/><path d="M2160 1352 Q2160 1369 2143 1369 L2160 1369 Z" fill="#1A70D0"/></svg>
<svg style="left:0;top:0" width="1" height="1"><path d="M1383.5 996.2 L1981.5 1250.3 L1971 1258.6 L2020 1262.3 L1382.7 996.5 Z" fill="#606868" opacity="0.6"/><path d="M1385.5 987.6 L1983.7 1241.1 L1982.2 1228.1 L2019.3 1261.1 L1970 1257.4 L1980.4 1248.9 L1382.7 995 Z" fill="#FF0000"/><path d="M2117.5 1305 L2117.5 1324 L2122 1320 L2125 1327 L2128 1325.7 L2125 1319 L2131 1319 Z" fill="#FFF" stroke="#000" stroke-width="1.1"/><rect x="2042" y="1271.2" width="93.8" height="53.8" rx="5" fill="none" stroke="#FF0000" stroke-width="8"/></svg>
</body></html>
